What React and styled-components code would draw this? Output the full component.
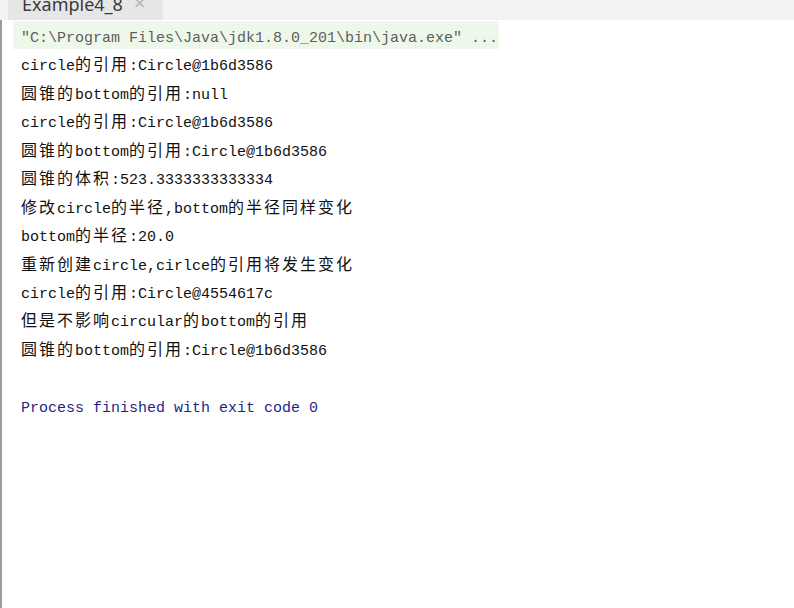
import styled, { createGlobalStyle } from "styled-components";

const GlobalStyle = createGlobalStyle`
  html, body {
    margin: 0;
    padding: 0;
    background: #ffffff;
  }
`;

const Window = styled.div`
  display: flex;
  flex-direction: column;
  width: 794px;
  height: 608px;
  overflow: hidden;
  background: #ffffff;
`;

// 탭 바
const TabBar = styled.div`
  display: flex;
  align-items: stretch;
  height: 20px;
  padding-left: 8px;
  background: #f2f2f2;
  overflow: hidden;
  flex-shrink: 0;
`;

const Tab = styled.div`
  display: flex;
  align-items: flex-start;
  gap: 10px;
  width: 141px;
  padding-left: 14px;
  background: #e6e6e6;
  overflow: hidden;
`;

const TabTitle = styled.span`
  margin-top: -9px;
  font-family: "Noto Sans", "Liberation Sans", sans-serif;
  font-size: 18px;
  line-height: 26px;
  color: #3a3a3a;
`;

const Close = styled.span`
  margin-top: -8px;
  font-family: "DejaVu Sans", sans-serif;
  font-size: 16px;
  line-height: 22px;
  color: #b4b4b4;
`;

// 콘솔
const Console = styled.div`
  flex: 1;
  padding-top: 1px;
  border-left: 2px solid #9c9c9c;
`;

const Line = styled.div`
  box-sizing: border-box;
  width: fit-content;
  height: 28.45px;
  margin-left: 11px;
  padding: 4px 1px 0 8px;
  font-family: "Liberation Mono", monospace;
  font-size: 15px;
  line-height: 28.45px;
  white-space: pre;
  color: ${(p) => p.$color || "#111111"};
  background: ${(p) => (p.$highlight ? "#edf8ea" : "transparent")};
`;

const Han = styled.span`
  font-family: "Noto Sans CJK SC", sans-serif;
  font-size: 16px;
  line-height: 1;
  letter-spacing: 2px;
`;

const split = (text) =>
  text.split(/([\u3000-\u9fff]+)/).map((part, i) =>
    i % 2 ? <Han key={i}>{part}</Han> : part
  );

const lines = [
  "circle的引用:Circle@1b6d3586",
  "圆锥的bottom的引用:null",
  "circle的引用:Circle@1b6d3586",
  "圆锥的bottom的引用:Circle@1b6d3586",
  "圆锥的体积:523.3333333333334",
  "修改circle的半径,bottom的半径同样变化",
  "bottom的半径:20.0",
  "重新创建circle,cirlce的引用将发生变化",
  "circle的引用:Circle@4554617c",
  "但是不影响circular的bottom的引用",
  "圆锥的bottom的引用:Circle@1b6d3586",
];

export default function App() {
  return (
    <Window>
      <GlobalStyle />
      <TabBar>
        <Tab>
          <TabTitle>Example4_8</TabTitle>
          <Close>×</Close>
        </Tab>
      </TabBar>
      <Console>
        <Line $highlight $color="#5e5e5e">
          {'"C:\\Program Files\\Java\\jdk1.8.0_201\\bin\\java.exe" ...'}
        </Line>
        {lines.map((text, i) => (
          <Line key={i}>{split(text)}</Line>
        ))}
        <Line />
        <Line $color="#1f1f8a">Process finished with exit code 0</Line>
      </Console>
    </Window>
  );
}
